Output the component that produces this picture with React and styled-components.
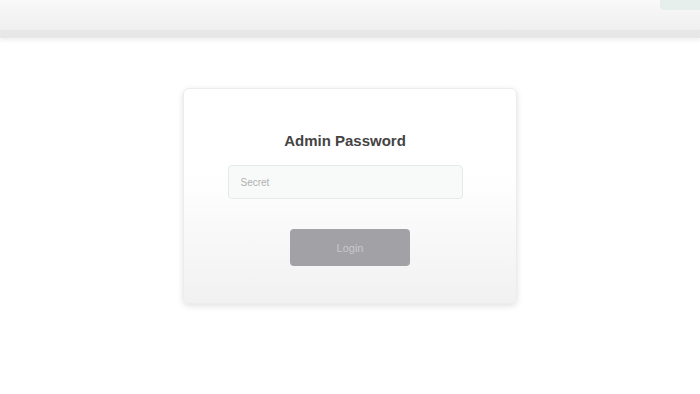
import styled, { createGlobalStyle } from "styled-components";

const Global = createGlobalStyle`
  html, body {
    margin: 0;
    padding: 0;
    background: #fff;
    font-family: "Liberation Sans", Arial, sans-serif;
  }
`;

const Page = styled.div`
  width: 700px;
  height: 394px;
  display: flex;
  flex-direction: column;
  overflow: hidden;
`;

const Header = styled.header`
  height: 30px;
  background: linear-gradient(#f9f9f9, #efefef);
  border-bottom: 8px solid #e7e7e7;
  box-shadow: 0 3px 3px #f2f2f2;
  display: flex;
  justify-content: flex-end;
`;

const Badge = styled.div`
  width: 40px;
  height: 10px;
  background: #e6efec;
  border-radius: 0 0 0 4px;
`;

const Main = styled.main`
  flex: 1;
  display: flex;
  justify-content: center;
  padding-top: 50px;
`;

const Card = styled.div`
  width: 334px;
  height: 216px;
  box-sizing: border-box;
  background: linear-gradient(#fff 40%, #f1f1f1);
  border: 1px solid #ececec;
  border-radius: 6px;
  box-shadow: 0 2px 6px rgba(0, 0, 0, 0.12);
  display: flex;
  flex-direction: column;
  align-items: center;
  padding-top: 43px;
`;

const Title = styled.h2`
  margin: 0 10px 0 0;
  font-size: 15px;
  font-weight: bold;
  color: #444;
`;

const Input = styled.input`
  margin: 16px 10px 0 0;
  width: 235px;
  height: 34px;
  box-sizing: border-box;
  border: 1px solid #e2ebe8;
  border-radius: 4px;
  background: #f7faf9;
  padding: 0 12px;
  font-family: inherit;
  font-size: 10px;
  color: #999;
  outline: none;
  &::placeholder {
    color: #b0b0b0;
  }
`;

const Button = styled.button`
  margin-top: 30px;
  width: 120px;
  height: 37px;
  border: none;
  border-radius: 4px;
  background: #a2a2a6;
  color: #c8c8cc;
  font-family: inherit;
  font-size: 11px;
`;

export default function App() {
  return (
    <Page>
      <Global />
      <Header>
        <Badge />
      </Header>
      <Main>
        <Card>
          <Title>Admin Password</Title>
          <Input type="password" placeholder="Secret" />
          <Button>Login</Button>
        </Card>
      </Main>
    </Page>
  );
}
